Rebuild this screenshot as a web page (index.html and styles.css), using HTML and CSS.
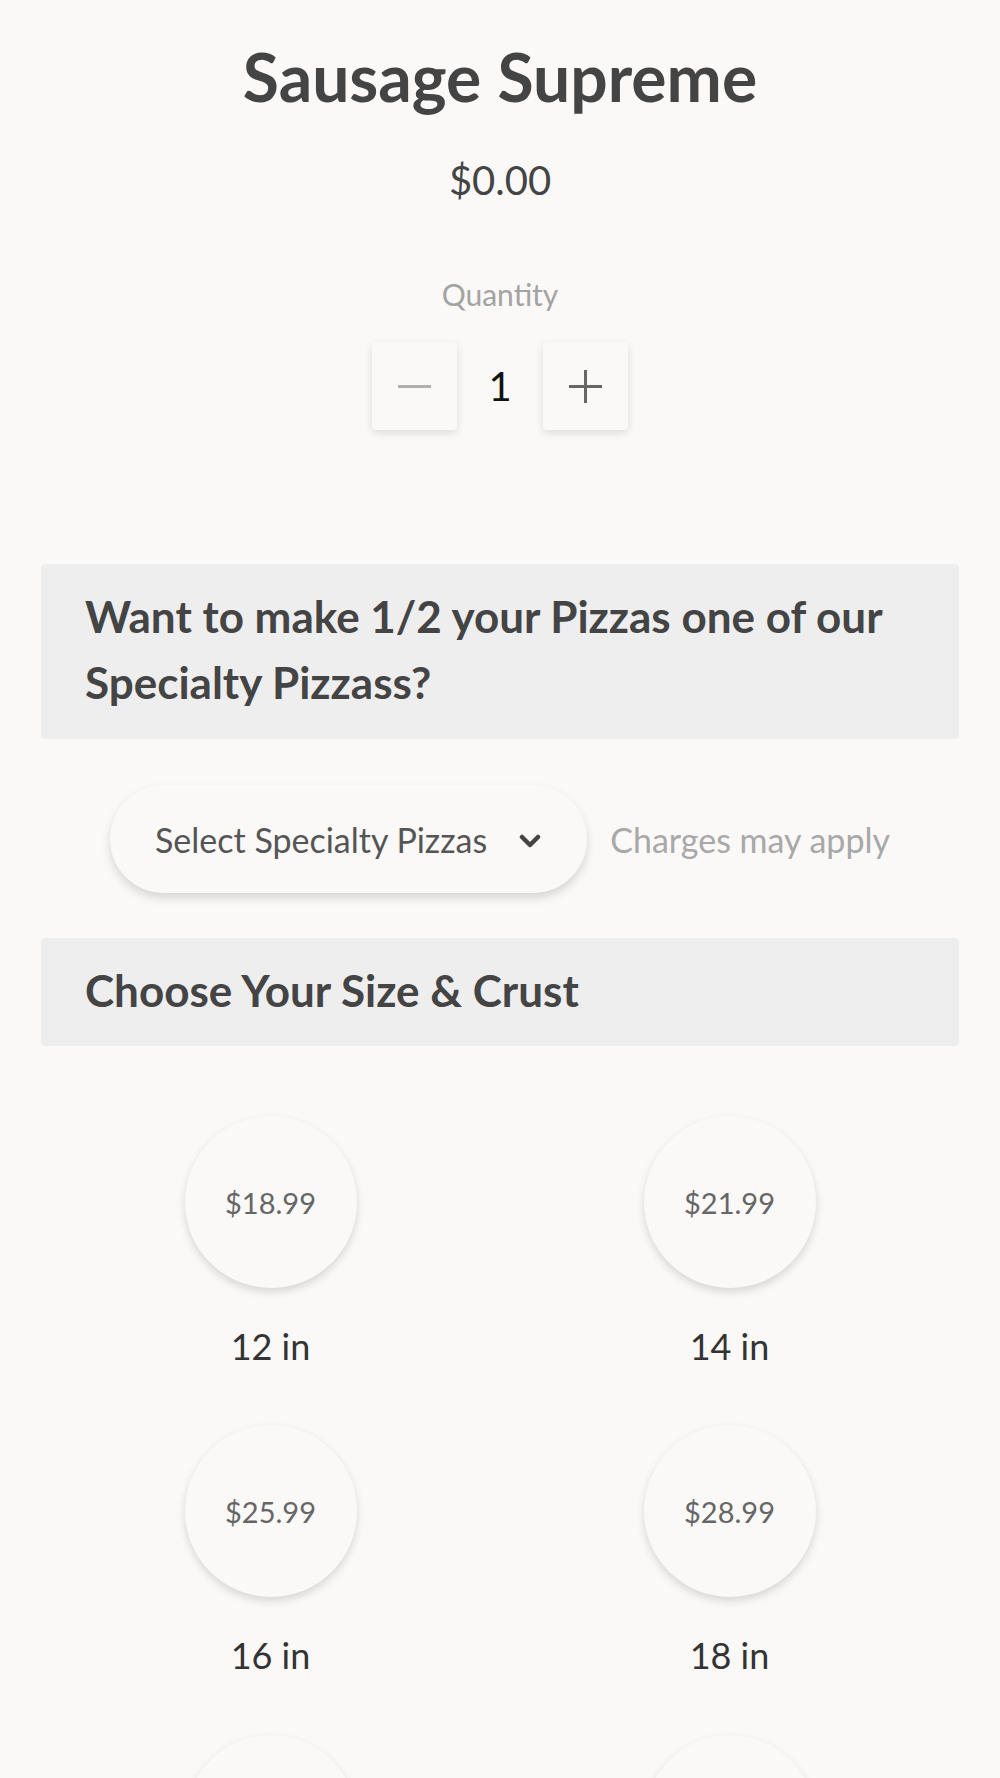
FILE: index.html
```html
<!DOCTYPE html>
<html lang="en">
<head>
    <meta charset="UTF-8">
    <meta name="viewport" content="width=device-width, initial-scale=1.0">
    <title>Sausage Supreme</title>
    <link rel="stylesheet" href="styles.css">
</head>
<body>
    <div class="product">
        <h1 class="title">Sausage Supreme</h1>
        <div class="price">$0.00</div>

        <div class="qty-label">Quantity</div>
        <div class="qty">
            <button class="qty-btn minus" type="button">
                <span class="bar"></span>
            </button>
            <span class="qty-value">1</span>
            <button class="qty-btn plus" type="button">
                <span class="bar"></span>
                <span class="bar vert"></span>
            </button>
        </div>
    </div>

    <div class="section">
        <h2 class="section-title">Want to make 1/2 your Pizzas one of our Specialty Pizzass?</h2>
    </div>

    <div class="specialty-row">
        <div class="select-pill">
            <span>Select Specialty Pizzas</span>
            <svg class="chevron" width="22" height="14" viewBox="0 0 22 14">
                <polyline points="3,3 11,11 19,3" fill="none" stroke="#444" stroke-width="4.5" stroke-linecap="round" stroke-linejoin="round"/>
            </svg>
        </div>
        <span class="charges">Charges may apply</span>
    </div>

    <div class="section short">
        <h2 class="section-title">Choose Your Size &amp; Crust</h2>
    </div>

    <div class="size-grid">
        <div class="size-item">
            <div class="size-circle">$18.99</div>
            <div class="size-name">12 in</div>
        </div>
        <div class="size-item">
            <div class="size-circle">$21.99</div>
            <div class="size-name">14 in</div>
        </div>
        <div class="size-item">
            <div class="size-circle">$25.99</div>
            <div class="size-name">16 in</div>
        </div>
        <div class="size-item">
            <div class="size-circle">$28.99</div>
            <div class="size-name">18 in</div>
        </div>
        <!-- 下一行只露出圆圈顶部 -->
        <div class="size-item">
            <div class="size-circle"></div>
        </div>
        <div class="size-item">
            <div class="size-circle"></div>
        </div>
    </div>
</body>
</html>
```

FILE: styles.css
```css
body {
    margin: 0;
    padding: 0 41px;
    background-color: #faf9f8;
    font-family: 'Lato', 'Noto Sans', sans-serif;
    color: #444;
    overflow: hidden;
}

/* 顶部标题和数量 */
.product {
    display: flex;
    flex-direction: column;
    align-items: center;
}

.title {
    margin: 37px 0 0;
    font-size: 66px;
    font-weight: 700;
    line-height: 1.2;
    color: #444;
}

.price {
    margin-top: 40px;
    font-size: 40px;
    line-height: 1.2;
    color: #444;
}

.qty-label {
    margin-top: 72px;
    font-size: 30px;
    line-height: 1.2;
    color: #a3a3a3;
}

.qty {
    display: flex;
    align-items: center;
    margin-top: 30px;
}

.qty-btn {
    position: relative;
    width: 85px;
    height: 88px;
    padding: 0;
    border: none;
    border-radius: 4px;
    background-color: #faf9f8;
    box-shadow: 0 3px 8px rgba(0,0,0,0.12);
}

.qty-btn .bar {
    position: absolute;
    left: 26px;
    top: 43px;
    width: 33px;
    height: 3px;
    background-color: #666;
}

.qty-btn.minus .bar {
    background-color: #b0b0b0;
}

.qty-btn .bar.vert {
    left: 41px;
    top: 28px;
    width: 3px;
    height: 33px;
}

.qty-value {
    width: 86px;
    text-align: center;
    font-size: 40px;
    color: #111;
}

/* 灰色标题栏 */
.section {
    margin-top: 134px;
    padding: 19px 44px 24px;
    background-color: #eeeeef;
    border-radius: 4px;
}

.section.short {
    margin-top: 45px;
    padding-bottom: 23px;
}

.section-title {
    margin: 0;
    font-size: 44px;
    font-weight: 700;
    line-height: 66px;
    color: #444;
}

.specialty-row {
    display: flex;
    justify-content: center;
    align-items: center;
    gap: 23px;
    margin-top: 46px;
}

.select-pill {
    display: flex;
    align-items: center;
    gap: 32px;
    height: 108px;
    padding: 0 46px 0 45px;
    box-sizing: border-box;
    border-radius: 54px;
    background-color: #faf9f8;
    box-shadow: 0 5px 10px rgba(0,0,0,0.14);
    font-size: 34px;
    color: #555;
}

.chevron {
    margin-top: 4px;
}

.charges {
    font-size: 34px;
    color: #a8a8a8;
}

/* 尺寸选择 */
.size-grid {
    display: grid;
    grid-template-columns: repeat(2, 1fr);
    row-gap: 57px;
    margin-top: 70px;
}

.size-item {
    display: flex;
    flex-direction: column;
    align-items: center;
}

.size-circle {
    width: 172px;
    height: 172px;
    border-radius: 50%;
    background-color: #faf9f8;
    box-shadow: 0 4px 8px rgba(0,0,0,0.14);
    display: flex;
    justify-content: center;
    align-items: center;
    font-size: 29px;
    color: #666;
}

.size-name {
    margin-top: 37px;
    font-size: 36px;
    line-height: 1.2;
    color: #333;
}
```
